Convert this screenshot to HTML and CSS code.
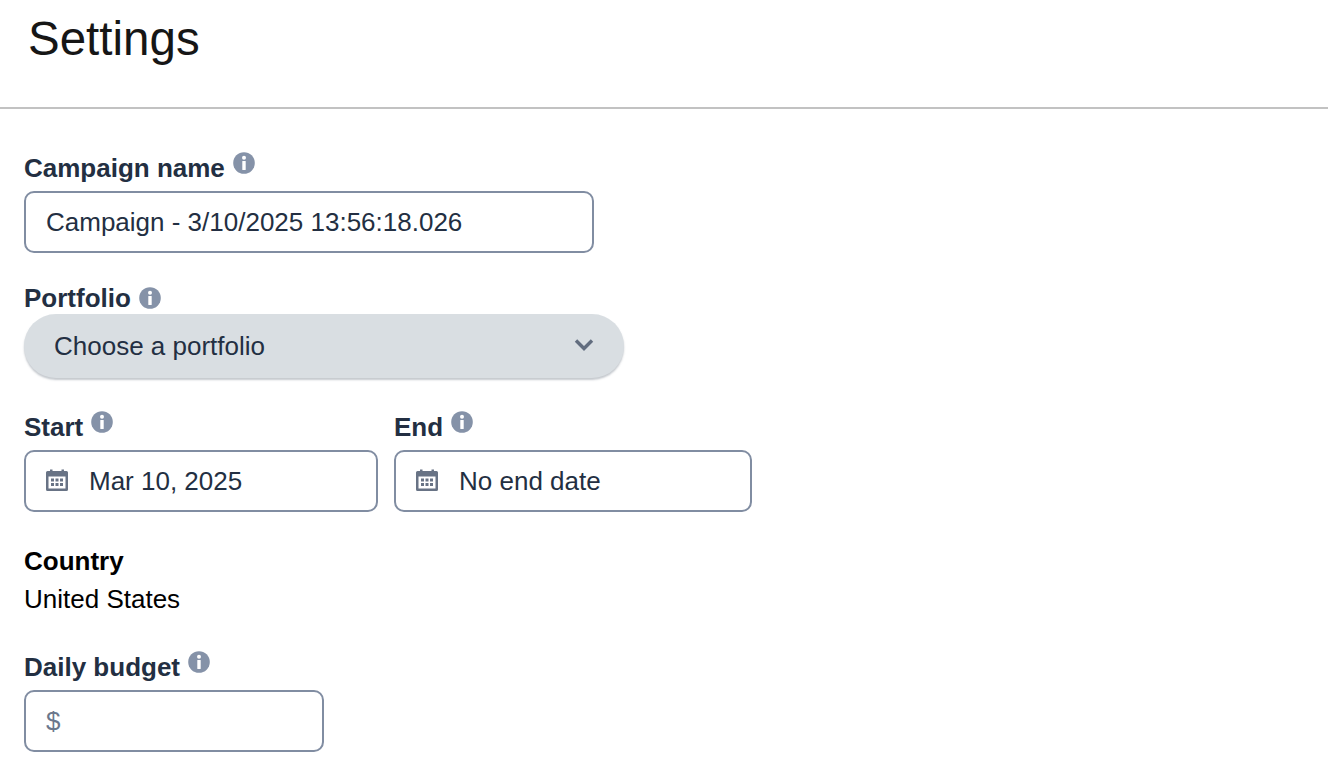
FILE: index.html
```html
<!DOCTYPE html>
<html lang="en">
<head>
<meta charset="utf-8">
<title>Settings</title>
<link rel="stylesheet" href="styles.css">
</head>
<body>
<svg class="defs" width="0" height="0" aria-hidden="true">
  <symbol id="info" viewBox="0 0 22 22">
    <circle cx="11" cy="11" r="10.8" fill="#8592a8"/>
    <circle cx="11" cy="5.800" r="2" fill="#fff"/>
    <rect x="9.300" y="9" width="3.400" height="9" rx="0.600" fill="#fff"/>
  </symbol>
  <symbol id="cal" viewBox="0 0 22 22">
    <path fill-rule="evenodd" fill="#687385" d="M0 3.500A1.500 1.500 0 0 1 1.500 2H4V0.500h2.500V2h9V0.500H18V2h2.500A1.500 1.500 0 0 1 22 3.500v17a1.500 1.500 0 0 1-1.500 1.500h-19A1.500 1.500 0 0 1 0 20.500zM2.500 7.500v12h17v-12z"/>
    <path fill="#687385" d="M5 9.500h3v3h-3zM9.500 9.500h3v3h-3zM14 9.500h3v3h-3zM5 14h3v3h-3zM9.500 14h3v3h-3zM14 14h3v3h-3z"/>
  </symbol>
</svg>
<header class="page-head"><h1 class="title">Settings</h1></header>
<main class="form">
  <section class="field name-field">
    <div class="label"><span>Campaign name</span><svg class="info"><use href="#info"/></svg></div>
    <div class="box box-name">Campaign - 3/10/2025 13:56:18.026</div>
  </section>
  <section class="field portfolio-field">
    <div class="label label-inline"><span>Portfolio</span><svg class="info"><use href="#info"/></svg></div>
    <div class="select"><span>Choose a portfolio</span>
      <svg class="chev" viewBox="0 0 20 14"><path d="M2 2.500l8 8 8-8" fill="none" stroke="#626d7f" stroke-width="3.400"/></svg>
    </div>
  </section>
  <section class="dates">
    <div class="field">
      <div class="label"><span>Start</span><svg class="info"><use href="#info"/></svg></div>
      <div class="box box-start"><svg class="cal"><use href="#cal"/></svg><span>Mar 10, 2025</span></div>
    </div>
    <div class="field">
      <div class="label"><span>End</span><svg class="info"><use href="#info"/></svg></div>
      <div class="box box-end"><svg class="cal"><use href="#cal"/></svg><span>No end date</span></div>
    </div>
  </section>
  <section class="country">
    <div class="country-label">Country</div>
    <div class="country-value">United States</div>
  </section>
  <section class="field">
    <div class="label"><span>Daily budget</span><svg class="info"><use href="#info"/></svg></div>
    <div class="box box-budget"><span class="currency">$</span></div>
  </section>
</main>
</body>
</html>
```
FILE: styles.css
```css
* { box-sizing: border-box; }
html, body { margin: 0; padding: 0; height: 100%; overflow: hidden; background: #fff; }
body { font-family: "Liberation Sans", Arial, sans-serif; color: #232f42; }
.defs { display: block; height: 0; }
.page-head { height: 109px; padding: 10px 0 0 28px; border-bottom: 2px solid #c2c2c2; }
.title { margin: 0; font-size: 47.500px; line-height: 58px; font-weight: 400; color: #161616; }
.form { padding: 41px 0 0 24px; }
.label { display: flex; align-items: flex-start; gap: 8px; height: 41px; padding-top: 3px; font-size: 26px; line-height: 30px; font-weight: 700; }
.info { width: 22px; height: 22px; margin-top: -1px; flex: none; }
.label-inline { height: 34px; }
.label-inline .info { margin-top: 4px; }
.box { display: flex; align-items: center; height: 62px; border: 2px solid #818da2; border-radius: 10px; font-size: 26px; background: #fff; }
.box-name { width: 570px; padding-left: 20px; }
.portfolio-field { margin-top: 27px; }
.select { display: flex; align-items: center; justify-content: space-between; width: 600px; height: 64px; padding: 0 30px 0 30px; border-radius: 32px; background: #d9dee2; box-shadow: 0 2px 2px rgba(90, 100, 115, 0.35); font-size: 26px; }
.chev { width: 20px; height: 14px; margin-top: -2px; }
.dates { display: flex; gap: 16px; margin-top: 31px; }
.box-start { width: 354px; padding-left: 20px; gap: 21px; }
.box-end { width: 358px; padding-left: 20px; gap: 21px; }
.cal { width: 22px; height: 22px; flex: none; margin-top: -2px; }
.country { margin-top: 30px; font-size: 26px; line-height: 38px; color: #000; }
.country-label { font-weight: 700; }
.box-budget { width: 300px; padding-left: 20px; }
.currency { color: #6b778c; }
.country + .field { margin-top: 31px; }
```
